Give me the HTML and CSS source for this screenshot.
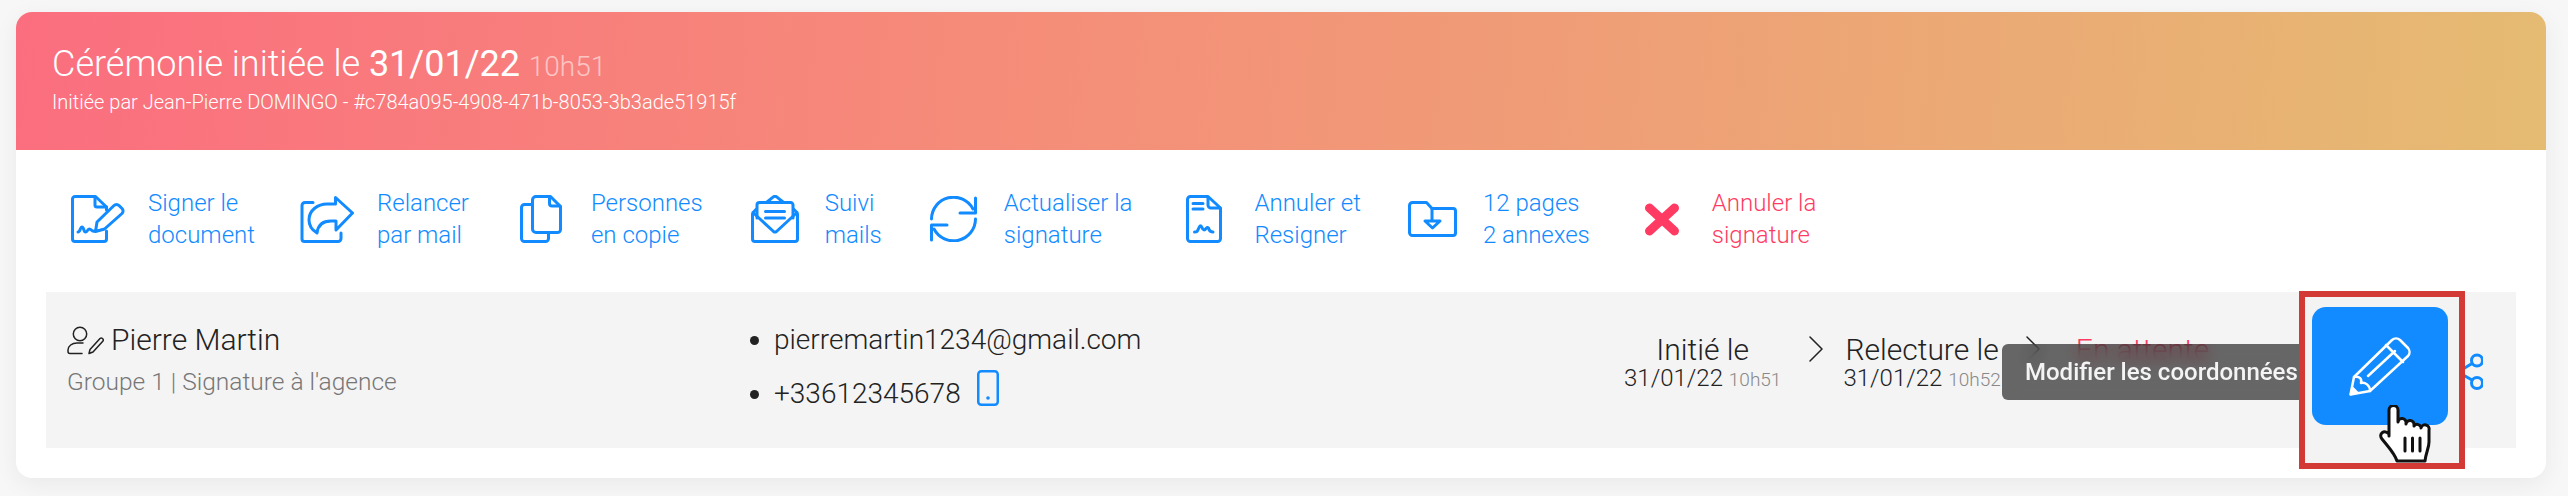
FILE: index.html
```html
<!DOCTYPE html>
<html lang="fr">
<head>
    <meta charset="UTF-8">
    <title>Cérémonie</title>
    <link rel="stylesheet" href="styles.css">
</head>
<body>
    <div class="card">
        <div class="card-header">
            <h1 class="title">Cérémonie initiée le <strong>31/01/22</strong> <span class="title-time">10h51</span></h1>
            <p class="subtitle">Initiée par Jean-Pierre DOMINGO - #c784a095-4908-471b-8053-3b3ade51915f</p>
        </div>

        <!-- Actions -->
        <div class="actions">
            <a class="action">
                <span class="action-icon">
                    <svg class="icon" width="54" height="48" viewBox="0 0 54 48"><path d="M35.5 15v-3L24.5 1.5H4A2.5 2.5 0 0 0 1.5 4v40A2.5 2.5 0 0 0 4 46.5h29a2.5 2.5 0 0 0 2.5-2.5v-8"/><path d="M24 2v8a2 2 0 0 0 2 2h9.500"/><path d="M26 27l17-16.500a3.500 3.500 0 0 1 5 0l3 3a3.500 3.500 0 0 1 0 5L33.500 34l-9 2.500z"/><path d="M7 37c2.500 0 2-5 4-5s1.500 5 3.500 5 2-3 4-3 2 3 5 2"/></svg>
                </span>
                <span>Signer le<br>document</span>
            </a>
            <a class="action">
                <span class="action-icon">
                    <svg class="icon" width="54" height="48" viewBox="0 0 54 48"><path d="M13 7.500H5A3 3 0 0 0 2 10.500V44a2.500 2.500 0 0 0 2.500 2.500H38a3 3 0 0 0 3-3V38"/><path d="M35.500 2.500L52.500 18 36 35v-9h-5c-8 0-13 4-14 12-5-3-8-7-8-13 0-10 9-16 18-16h8.500z"/></svg>
                </span>
                <span>Relancer<br>par mail</span>
            </a>
            <a class="action">
                <span class="action-icon">
                    <svg class="icon" width="42" height="48" viewBox="0 0 42 48"><path d="M12 9.500H4.500a3 3 0 0 0-3 3v31a3 3 0 0 0 3 3h21a3 3 0 0 0 3-3V38"/><path d="M30.500 1.500H16a3.500 3.500 0 0 0-3.500 3.500v29a3.500 3.500 0 0 0 3.500 3.500h21.500a3 3 0 0 0 3-3V11.500z"/><path d="M29.500 2v6.500a2.500 2.500 0 0 0 2.500 2.500h8"/></svg>
                </span>
                <span>Personnes<br>en copie</span>
            </a>
            <a class="action">
                <span class="action-icon">
                    <svg class="icon" width="48" height="48" viewBox="0 0 48 48"><path d="M5.500 14l-2.500 2.500a3 3 0 0 0-1.500 2.500v25a2.500 2.500 0 0 0 2.500 2.500h40a2.500 2.500 0 0 0 2.500-2.500V19a3 3 0 0 0-1.500-2.500L42.500 14"/><path d="M2.500 18l20 18.500a2.500 2.500 0 0 0 3 0l20-18.500"/><path d="M6 23V10a2.500 2.500 0 0 1 2.500-2.500h31A2.500 2.500 0 0 1 42 10v13"/><path d="M16 7l6-4.800a3 3 0 0 1 4 0L32 7"/><path d="M14.500 16.500h19M14.500 23h19"/></svg>
                </span>
                <span>Suivi<br>mails</span>
            </a>
            <a class="action">
                <span class="action-icon">
                    <svg class="icon" width="47" height="46" viewBox="0 0 47 46"><path d="M1.500 23A22 22 0 0 1 43 13"/><path d="M45.500 23A22 22 0 0 1 4 33"/><path d="M45.500 2v15H30"/><path d="M1.500 44V29H17"/></svg>
                </span>
                <span>Actualiser la<br>signature</span>
            </a>
            <a class="action">
                <span class="action-icon">
                    <svg class="icon" width="36" height="48" viewBox="0 0 36 48"><path d="M22 1.500H4.500a3 3 0 0 0-3 3v39a3 3 0 0 0 3 3h27a3 3 0 0 0 3-3V13z"/><path d="M22 2v8a3 3 0 0 0 3 3h9"/><path d="M7 8.500h10M7 14h10"/><path d="M8.500 37c3 0 3-1 4.500-4.500 1-2.500 2-2.500 3 0 1 3 2.500 3 4 1 1.500-1.500 3-1 3 1 1 2 2 2.500 4 2.500"/></svg>
                </span>
                <span>Annuler et<br>Resigner</span>
            </a>
            <a class="action">
                <span class="action-icon">
                    <svg class="icon" width="49" height="36" viewBox="0 0 49 36"><path d="M4.500 1.500H18.500l5.500 6h21a2.500 2.500 0 0 1 2.500 2.500v22a2.500 2.500 0 0 1-2.500 2.500H4.500A3 3 0 0 1 1.500 31.500v-27a3 3 0 0 1 3-3z"/><path d="M24 8v11"/><path d="M17 20h15l-7.500 7z"/></svg>
                </span>
                <span>12 pages<br>2 annexes</span>
            </a>
            <a class="action action-danger">
                <span class="action-icon">
                    <svg class="icon-cross" width="36" height="33" viewBox="0 0 36 33"><path d="M5.500 5l25 23M30.500 5l-25 23"/></svg>
                </span>
                <span>Annuler la<br>signature</span>
            </a>
        </div>

        <!-- Signataire -->
        <div class="signer">
            <div class="signer-info">
                <div class="signer-name">
                    <svg class="icon-small" width="37" height="29" viewBox="0 0 37 29"><circle cx="13" cy="8" r="6.700"/><path d="M15 27.500H3a2 2 0 0 1-2-2V24c0-4 4-7 9-7h6"/><path d="M22 27.500l1-4 10-11a2 2 0 0 1 3 2.500l-10 11z"/></svg>
                    Pierre Martin
                </div>
                <div class="signer-group">Groupe 1 | Signature à l'agence</div>
            </div>
            <ul class="contact">
                <li>pierremartin1234@gmail.com</li>
                <li>+33612345678
                    <svg class="phone" width="22" height="36" viewBox="0 0 22 36"><rect x="1.250" y="1.250" width="19.500" height="33.500" rx="3"/><circle cx="11" cy="28" r="1.800"/></svg>
                </li>
            </ul>
            <div class="steps">
                <div class="step">
                    <div class="step-label">Initié le</div>
                    <div class="step-date">31/01/22 <small>10h51</small></div>
                </div>
                <svg class="chevron" width="14" height="26" viewBox="0 0 14 26"><path d="M1 1l12 12L1 25"/></svg>
                <div class="step">
                    <div class="step-label">Relecture le</div>
                    <div class="step-date">31/01/22 <small>10h52</small></div>
                </div>
                <svg class="chevron chevron-last" width="14" height="26" viewBox="0 0 14 26"><path d="M1 1l12 12L1 25"/></svg>
                <div class="step step-pending">
                    <div class="step-label">En attente</div>
                </div>
            </div>

            <svg class="share" width="26" height="40" viewBox="0 0 26 40"><circle cx="20" cy="8.500" r="5.500"/><circle cx="20" cy="31" r="5.500"/><path d="M15 11.500L1 20l14 8"/></svg>
            <div class="tooltip">Modifier les coordonnées</div>
            <div class="highlight">
                <button class="edit-button">
                    <svg width="63" height="60" viewBox="0 0 63 60"><path d="M1.500 58.500L5 41 43 4a6 6 0 0 1 8 0l8 8a6 6 0 0 1 0 8L21 55z"/><path d="M37 9l17 17"/><path d="M19 40l27-25"/><path d="M5 41c6-1 8 2 7 6 4-1 9 2 9 8"/><path d="M2 58l6-1.500-4.500-4.500z" class="pencil-tip"/></svg>
                </button>
                <svg class="cursor" width="53" height="58" viewBox="0 0 53 58"><path d="M10 31V5a4.500 4.500 0 0 1 9 0v12a4 4 0 0 1 8 1v1a4 4 0 0 1 8 1v1a4 4 0 0 1 7 1v1a4 4 0 0 1 8 2v12c0 6-3 10-4 19H18c-2-7-7-12-15-22-4-5 2-10 7-5z"/><path d="M26 33v13M33.500 33v13M41 33v13"/></svg>
            </div>
        </div>
    </div>
</body>
</html>
```
FILE: styles.css
```css
* {
    box-sizing: border-box;
}

html,
body {
    height: 496px;
    overflow: hidden;
}

body {
    margin: 0;
    padding: 12px 22px 0 16px;
    background-color: #f7f7f7;
    font-family: Roboto, "Liberation Sans", sans-serif;
    font-weight: 300;
    color: #222;
}

.card {
    height: 466px;
    background-color: #fff;
    border-radius: 16px;
    box-shadow: 0 6px 24px rgba(0, 0, 0, 0.06);
    overflow: hidden;
}

.card-header {
    height: 138px;
    padding: 29px 36px 0;
    background: linear-gradient(95deg, #fb6e7f 0%, #f58d79 40%, #e5bb72 100%);
    color: #fff;
}

.title {
    margin: 0;
    font-size: 36px;
    font-weight: 300;
    line-height: 46px;
}

.title strong {
    font-weight: 400;
}

.title-time {
    font-size: 28px;
    font-weight: 300;
    opacity: 0.55;
}

.subtitle {
    margin: -3px 0 0;
    font-size: 20px;
    line-height: 30px;
}

/* Actions */
.actions {
    display: flex;
    align-items: center;
    gap: 42px;
    height: 142px;
    padding: 0 0 4px 52px;
}

.action {
    display: flex;
    align-items: center;
    gap: 20px;
    color: #118bff;
    font-size: 24px;
    line-height: 32px;
}

.action-danger {
    color: #ff3b63;
}

.action-icon {
    display: flex;
    align-items: center;
    justify-content: center;
    width: 60px;
}

.icon,
.icon-small,
.phone,
.chevron,
.share,
.edit-button svg,
.cursor {
    fill: none;
    stroke-linecap: round;
    stroke-linejoin: round;
}

.icon {
    stroke: #118bff;
    stroke-width: 3;
}

.icon-cross {
    fill: none;
    stroke: #ff3b63;
    stroke-width: 9;
    stroke-linecap: round;
}

/* Signataire */
.signer {
    position: relative;
    display: flex;
    align-items: flex-start;
    height: 156px;
    margin: 0 30px;
    background-color: #f4f4f4;
}

.signer-info {
    width: 702px;
    padding: 32px 0 0 21px;
}

.signer-name {
    display: flex;
    align-items: center;
    gap: 7px;
    font-size: 30px;
    line-height: 32px;
}

.icon-small {
    stroke: #222;
    stroke-width: 1.500;
}

.signer-group {
    margin-top: 11px;
    font-size: 24.500px;
    line-height: 30px;
    color: #777;
}

.contact {
    width: 876px;
    margin: 0;
    padding: 32px 0 0 26px;
    font-size: 28px;
    line-height: 32px;
}

.contact li {
    display: list-item;
    margin-bottom: 22px;
}

.phone {
    margin: -12px 0 0 10px;
    vertical-align: -3px;
    stroke: #118bff;
    stroke-width: 2.500;
}

.phone circle {
    fill: #118bff;
    stroke: none;
}

.steps {
    display: flex;
    align-items: flex-start;
    padding-top: 42px;
}

.step {
    text-align: center;
}

.step-label {
    font-size: 30px;
    line-height: 32px;
}

.step-date {
    font-size: 24px;
    line-height: 24px;
}

.step-date small {
    font-size: 19px;
    color: #888;
}

.step-pending {
    margin-left: -2px;
    color: #ff3b63;
}

.chevron {
    margin: 2px 20px 0 28px;
    stroke: #222;
    stroke-width: 1.500;
}

.chevron-last {
    margin: 2px 38px 0 25px;
}

/* Survol du bouton */
.share {
    position: absolute;
    left: 2411px;
    top: 60px;
    stroke: #118bff;
    stroke-width: 3;
}

.tooltip {
    position: absolute;
    left: 1956px;
    top: 52px;
    width: 300px;
    height: 56px;
    padding-left: 23px;
    border-radius: 6px 0 0 6px;
    background-color: rgba(0, 0, 0, 0.58);
    backdrop-filter: blur(8px);
    color: #f4f4f4;
    font-size: 24px;
    font-weight: 500;
    line-height: 56px;
    white-space: nowrap;
}

.highlight {
    position: absolute;
    left: 2253px;
    top: -1px;
    width: 166px;
    height: 178px;
    padding: 10px 7px;
    background-color: #f3f3f3;
    border: 6px solid #d43a35;
}

.edit-button {
    display: flex;
    align-items: center;
    justify-content: center;
    width: 136px;
    height: 118px;
    padding: 0;
    border: none;
    border-radius: 14px;
    background-color: #118bff;
}

.edit-button svg {
    stroke: #fff;
    stroke-width: 2.500;
}

.pencil-tip {
    fill: #fff;
}

.cursor {
    position: absolute;
    left: 74px;
    top: 108px;
    fill: #fff;
    stroke: #111;
    stroke-width: 3;
    filter: blur(0.6px);
}
```
